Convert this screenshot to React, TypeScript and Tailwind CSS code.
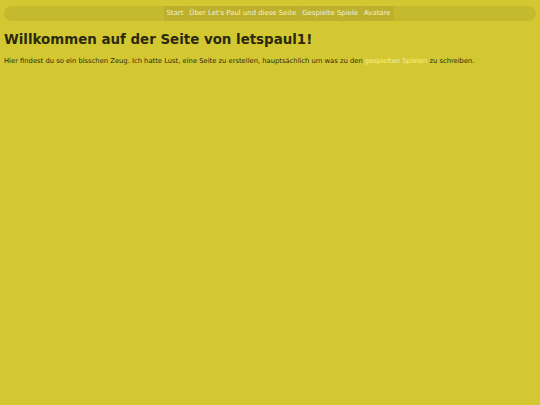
export default function App() {
  const items = ['Start', "Über Let's Paul und diese Seite", 'Gespielte Spiele', 'Avatare'];
  return (
    <div className="min-h-[405px] bg-[#d3c832] px-[4px] pt-[6px] text-[#2b2a0e]" style={{ fontFamily: '"DejaVu Sans", Verdana, sans-serif' }}>
      <nav className="flex h-[15px] justify-center rounded-full bg-[#c5b92e] pl-[17px]">
        {items.map((t) => (
          <a key={t} className="flex items-center rounded-[2px] bg-[#bcb02c] px-[3px] text-[6.9px] leading-none text-[#f4f1d6]">
            {t}
          </a>
        ))}
      </nav>
      <h1 className="mt-[10px] text-[13.4px] font-bold leading-[18px]">Willkommen auf der Seite von letspaul1!</h1>
      <p className="mt-[7px] text-[6.77px] leading-[10px]">
        Hier findest du so ein bisschen Zeug. Ich hatte Lust, eine Seite zu erstellen, hauptsächlich um was zu den{' '}
        <a className="text-[#f3eea8]">gespielten Spielen</a> zu schreiben.
      </p>
    </div>
  );
}
